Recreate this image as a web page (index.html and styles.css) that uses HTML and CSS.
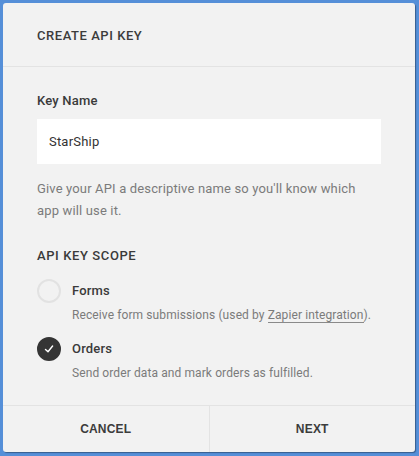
FILE: index.html
```html
<!DOCTYPE html>
<html>
<head>
<meta charset="utf-8">
<link rel="stylesheet" href="styles.css">
</head>
<body>
<div class="dialog">
  <div class="header">CREATE API KEY</div>
  <div class="body">
    <div class="label">Key Name</div>
    <div class="input">StarShip</div>
    <p class="help">Give your API a descriptive name so you'll know which app will use it.</p>
    <div class="section">API KEY SCOPE</div>
    <div class="option">
      <span class="radio"></span>
      <div class="opt-text">
        <div class="opt-title">Forms</div>
        <div class="opt-desc">Receive form submissions (used by <span class="link">Zapier integration</span>).</div>
      </div>
    </div>
    <div class="option">
      <span class="radio checked">
        <svg width="10" height="10" viewBox="0 0 10 10"><path d="M1.5 5.4 L4 7.8 L8.6 2" fill="none" stroke="#fff" stroke-width="1.4" stroke-linecap="round" stroke-linejoin="round"/></svg>
      </span>
      <div class="opt-text">
        <div class="opt-title">Orders</div>
        <div class="opt-desc">Send order data and mark orders as fulfilled.</div>
      </div>
    </div>
  </div>
  <div class="footer">
    <div class="btn">CANCEL</div>
    <div class="btn">NEXT</div>
  </div>
</div>
</body>
</html>
```
FILE: styles.css
```css
html, body { margin: 0; padding: 0; }
body {
  background: #558fd8;
  width: 419px;
  height: 456px;
  padding: 3px 4px 4px 3px;
  box-sizing: border-box;
  font-family: Roboto, sans-serif;
}
.dialog {
  background: #f2f2f2;
  height: 449px;
  border-radius: 3px;
  box-shadow: 1px 1px 1px rgba(0,0,0,0.35);
  display: flex;
  flex-direction: column;
}
.header {
  height: 64px;
  box-sizing: border-box;
  padding: 25px 0 0 34px;
  font-size: 13px;
  font-weight: 500;
  color: #3c3c3c;
  letter-spacing: 0.55px;
  border-bottom: 1px solid #e3e3e3;
}
.body {
  flex: 1;
  padding: 25px 34px 0 34px;
}
.label {
  font-size: 13px;
  font-weight: 500;
  color: #3a3a3a;
  line-height: 18px;
  letter-spacing: 0.2px;
}
.input {
  margin-top: 9px;
  background: #fff;
  height: 45px;
  box-sizing: border-box;
  padding: 13px 12px;
  font-size: 13px;
  color: #333;
  line-height: 19px;
  letter-spacing: 0.2px;
}
.help {
  margin: 14px 0 0 0;
  font-size: 13px;
  line-height: 22px;
  color: #7b7b7b;
  width: 330px;
  letter-spacing: 0.15px;
}
.section {
  margin-top: 25px;
  font-size: 13px;
  font-weight: 500;
  color: #3a3a3a;
  letter-spacing: 0.6px;
  line-height: 18px;
}
.option {
  display: flex;
  gap: 11px;
  margin-top: 17px;
}
.option + .option { margin-top: 16px; }
.radio {
  width: 20px;
  height: 20px;
  border: 2px solid #e2e2e2;
  border-radius: 50%;
  flex: none;
  margin-top: -3px;
  display: flex;
  align-items: center;
  justify-content: center;
}
.radio.checked {
  background: #353535;
  border-color: #353535;
}
.opt-title {
  font-size: 13px;
  font-weight: 500;
  color: #3a3a3a;
  line-height: 18px;
  letter-spacing: 0.2px;
}
.opt-desc {
  margin-top: 6px;
  font-size: 12px;
  color: #7b7b7b;
  line-height: 18px;
  letter-spacing: 0.1px;
}
.link {
  border-bottom: 1px solid #8a8a8a;
}
.footer {
  height: 46px;
  border-top: 1px solid #e3e3e3;
  display: flex;
}
.btn {
  flex: 1;
  display: flex;
  align-items: center;
  justify-content: center;
  font-family: "Liberation Sans", Arial, sans-serif;
  font-weight: 700;
  font-size: 12px;
  color: #3c3c3c;
  letter-spacing: 0.2px;
}
.btn + .btn { border-left: 1px solid #e3e3e3; }
```
